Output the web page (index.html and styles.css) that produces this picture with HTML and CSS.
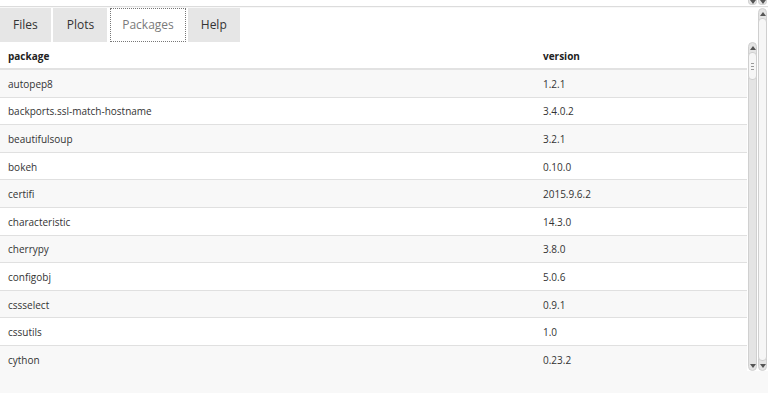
FILE: index.html
```html
<!DOCTYPE html>
<html>
<head>
<meta charset="utf-8">
<link rel="stylesheet" href="styles.css">
</head>
<body>
<div class="page">
  <div class="top-strip">
    <div class="stub"><svg width="6" height="4" viewBox="0 0 6 4"><path d="M0 0h6L3 4z" fill="#555"/></svg></div>
    <div class="stub"><svg width="6" height="4" viewBox="0 0 6 4"><path d="M0 0h6L3 4z" fill="#555"/></svg></div>
  </div>
  <div class="main">
    <div class="content">
      <div class="tabs">
        <div class="tab">Files</div>
        <div class="tab">Plots</div>
        <div class="tab active">Packages</div>
        <div class="tab">Help</div>
      </div>
      <div class="panel">
        <div class="table">
          <div class="row head"><div class="c1">package</div><div class="c2">version</div></div>
          <div class="row odd"><div class="c1">autopep8</div><div class="c2">1.2.1</div></div>
          <div class="row"><div class="c1">backports.ssl-match-hostname</div><div class="c2">3.4.0.2</div></div>
          <div class="row odd"><div class="c1">beautifulsoup</div><div class="c2">3.2.1</div></div>
          <div class="row"><div class="c1">bokeh</div><div class="c2">0.10.0</div></div>
          <div class="row odd"><div class="c1">certifi</div><div class="c2">2015.9.6.2</div></div>
          <div class="row"><div class="c1">characteristic</div><div class="c2">14.3.0</div></div>
          <div class="row odd"><div class="c1">cherrypy</div><div class="c2">3.8.0</div></div>
          <div class="row"><div class="c1">configobj</div><div class="c2">5.0.6</div></div>
          <div class="row odd"><div class="c1">cssselect</div><div class="c2">0.9.1</div></div>
          <div class="row"><div class="c1">cssutils</div><div class="c2">1.0</div></div>
          <div class="row odd"><div class="c1">cython</div><div class="c2">0.23.2</div></div>
        </div>
        <div class="sbar inner">
          <div class="arrow"><svg width="6" height="4" viewBox="0 0 6 4"><path d="M0 4h6L3 0z" fill="#555"/></svg></div>
          <div class="thumb short"><span></span><span></span><span></span></div>
          <div class="track"></div>
          <div class="arrow"><svg width="6" height="4" viewBox="0 0 6 4"><path d="M0 0h6L3 4z" fill="#555"/></svg></div>
        </div>
      </div>
    </div>
    <div class="sbar outer">
      <div class="arrow"><svg width="6" height="4" viewBox="0 0 6 4"><path d="M0 4h6L3 0z" fill="#555"/></svg></div>
      <div class="thumb long"></div>
      <div class="arrow"><svg width="6" height="4" viewBox="0 0 6 4"><path d="M0 0h6L3 4z" fill="#555"/></svg></div>
    </div>
  </div>
</div>
</body>
</html>
```
FILE: styles.css
```css
html, body {
  margin: 0;
  padding: 0;
  background: #f8f8f8;
}
body {
  font-family: "Open Sans", "DejaVu Sans", sans-serif;
  color: #333;
}
.page {
  width: 768px;
  height: 393px;
  overflow: hidden;
}
.top-strip {
  height: 6px;
  background: #fff;
  border-bottom: 1px solid #dcdcdc;
  display: flex;
  justify-content: flex-end;
  gap: 1px;
  padding-right: 1px;
}
.stub {
  width: 9px;
  height: 5px;
  background: #e6e6e6;
  border: 1px solid #d2d2d2;
  border-top: none;
  border-radius: 0 0 4px 4px;
  box-sizing: border-box;
  display: flex;
  justify-content: center;
  align-items: center;
}
.main {
  display: flex;
  height: 363px;
  background: #fff;
  margin-top: 1px;
}
.content {
  flex: 1;
  display: flex;
  flex-direction: column;
}
.tabs {
  display: flex;
  gap: 2px;
  height: 34px;
  background: #fff;
}
.tab {
  background: #e6e6e6;
  color: #333;
  font-size: 12px;
  line-height: 34px;
  height: 34px;
  box-sizing: border-box;
  padding: 0 13px;
}
.tab:nth-child(2) { padding: 0 13px 0 14px; }
.tab:nth-child(3) { margin-left: 1px; }
.tab.active {
  background: #fff;
  color: #7a7a7a;
  border: 1px dotted #777;
  line-height: 32px;
  padding: 0 11px;
}
.panel {
  flex: 1;
  display: flex;
  min-height: 0;
}
.table {
  flex: 1;
  overflow: hidden;
}
.row {
  display: flex;
  height: 27.6px;
  box-sizing: border-box;
  border-bottom: 1px solid #e0e0e0;
  align-items: center;
  font-size: 10px;
  padding-top: 1px;
  background: #fff;
}
.row.odd { background: #f8f8f8; }
.row.head {
  height: 28px;
  font-weight: bold;
  color: #222;
  border-bottom: 2px solid #e2e2e2;
}
.c1 {
  width: 535px;
  padding-left: 8px;
}
.c2 { flex: 1; }
.sbar {
  width: 9px;
  display: flex;
  flex-direction: column;
  background: #e4e4e4;
  border: 1px solid #d0d0d0;
  border-radius: 5px;
  box-sizing: border-box;
  margin-left: 1px;
}
.sbar.outer { margin-right: 1px; }
.arrow {
  height: 9px;
  display: flex;
  justify-content: center;
  align-items: center;
  flex: none;
}
.thumb {
  background: #f6f6f6;
  border: 1px solid #cfcfcf;
  border-radius: 4px;
  margin: 0 -1px;
  display: flex;
  flex-direction: column;
  align-items: center;
  justify-content: center;
  gap: 2px;
}
.thumb span {
  width: 3px;
  height: 1px;
  background: #999;
}
.thumb.short { height: 26px; }
.thumb.long { flex: 1; }
.track { flex: 1; }
```
